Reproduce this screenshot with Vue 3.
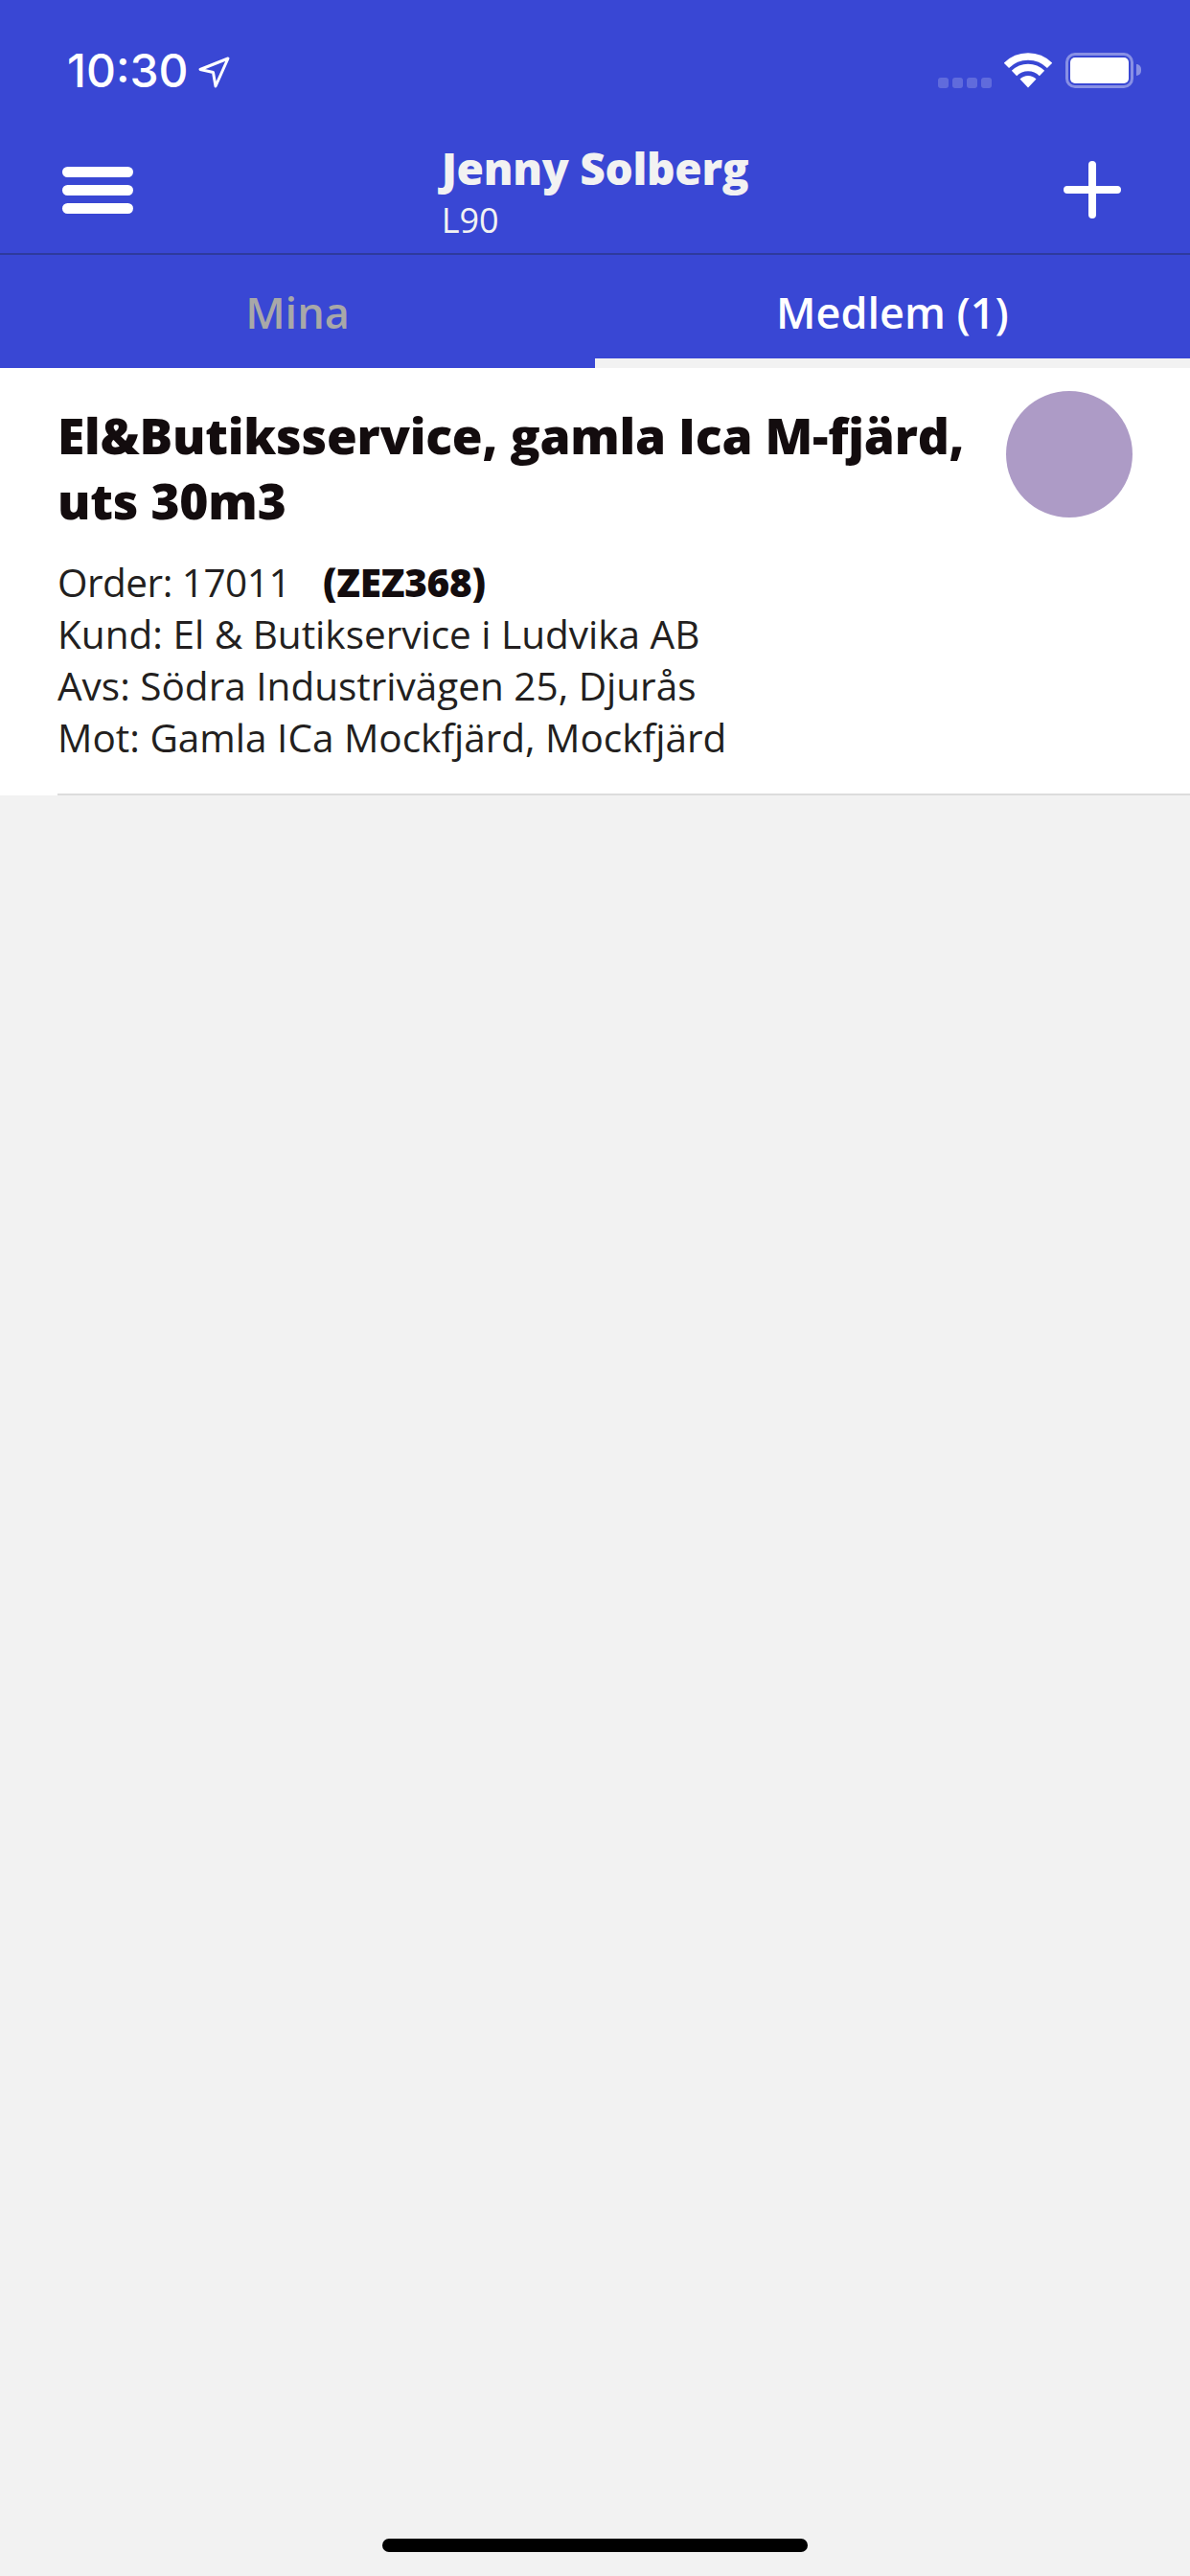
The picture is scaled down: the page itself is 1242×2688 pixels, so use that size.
<template>
  <div class="screen">
    <div class="top">
      <div class="status">
        <div class="clock">
          <span>10:30</span>
          <svg class="arrow" width="33" height="33" viewBox="0 0 33 33">
            <path d="M31 2 L2 13.5 L15.5 16.5 L18 31 Z" fill="none" stroke="#fff" stroke-width="3" stroke-linejoin="round" />
          </svg>
        </div>
        <div class="status-right">
          <div class="signal">
            <i v-for="n in 4" :key="n"></i>
          </div>
          <svg class="wifi" width="50" height="37" viewBox="0 0 50 37">
            <path d="M2.4 13.4 A32 32 0 0 1 47.6 13.4" fill="none" stroke="#fff" stroke-width="7.5" />
            <path d="M10.5 21.5 A20.5 20.5 0 0 1 39.5 21.5" fill="none" stroke="#fff" stroke-width="7.5" />
            <path d="M25 36.5 L16.5 27.5 A12 12 0 0 1 33.5 27.5 Z" fill="#fff" />
          </svg>
          <div class="battery">
            <div class="battery-level"></div>
          </div>
          <div class="battery-nub"></div>
        </div>
      </div>

      <header class="header">
        <button class="burger" aria-label="Meny">
          <i></i><i></i><i></i>
        </button>
        <div class="who">
          <div class="who-name">Jenny Solberg</div>
          <div class="who-sub">L90</div>
        </div>
        <svg class="plus" width="60" height="60" viewBox="0 0 60 60">
          <path d="M30 4 V56 M4 30 H56" fill="none" stroke="#fff" stroke-width="8" stroke-linecap="round" />
        </svg>
      </header>

      <nav class="tabs">
        <div
          v-for="tab in tabs"
          :key="tab.label"
          class="tab"
          :class="{ 'tab--active': tab.active }"
        >
          {{ tab.label }}
        </div>
      </nav>
    </div>

    <section class="order">
      <div class="order-main">
        <div class="order-text">
          <h2 class="order-title">El&amp;Butiksservice, gamla Ica M-fjärd, uts 30m3</h2>
          <div class="order-line order-line--first">Order: 17011 <b class="reg">(ZEZ368)</b></div>
          <div class="order-line">Kund: El &amp; Butikservice i Ludvika AB</div>
          <div class="order-line">Avs: Södra Industrivägen 25, Djurås</div>
          <div class="order-line">Mot: Gamla ICa Mockfjärd, Mockfjärd</div>
        </div>
        <div class="dot"></div>
      </div>
    </section>

    <div class="home-bar"></div>
  </div>
</template>

<script setup>
const tabs = [
  { label: 'Mina', active: false },
  { label: 'Medlem (1)', active: true }
]
</script>

<style>
body {
  background: #f2f2f2;
}
</style>

<style scoped>
.screen {
  display: flex;
  flex-direction: column;
  height: 2688px;
  background: #f2f2f2;
  font-family: "Open Sans", "Noto Sans", sans-serif;
}

.top {
  background: #3947d4;
  color: #fff;
}

.status {
  display: flex;
  justify-content: space-between;
  align-items: flex-start;
  height: 132px;
  padding: 48px 51px 0 70px;
  box-sizing: border-box;
}

.clock {
  display: flex;
  align-items: center;
  gap: 10px;
  font-family: Inter, sans-serif;
  font-size: 48px;
  font-weight: 500;
  line-height: 52px;
}

.arrow {
  margin-top: 2px;
}

.status-right {
  display: flex;
  align-items: flex-start;
  padding-top: 7px;
}

.signal {
  display: flex;
  gap: 4px;
  margin: 26px 13px 0 0;
}

.signal i {
  width: 11px;
  height: 11px;
  border-radius: 3px;
  background: rgba(255, 255, 255, 0.2);
}

.wifi {
  margin-right: 14px;
}

.battery {
  width: 71px;
  height: 37px;
  padding: 2px;
  box-sizing: border-box;
  border: 3px solid rgba(255, 255, 255, 0.4);
  border-radius: 10px;
}

.battery-level {
  height: 100%;
  border-radius: 5px;
  background: #fff;
}

.battery-nub {
  width: 5px;
  height: 12px;
  margin: 12px 0 0 3px;
  border-radius: 0 5px 5px 0;
  background: rgba(255, 255, 255, 0.4);
}

.header {
  display: grid;
  grid-template-columns: 1fr auto 1fr;
  align-items: center;
  height: 134px;
  padding: 0 65px;
  box-sizing: border-box;
  border-bottom: 2px solid #2e3a9e;
}

.burger {
  display: flex;
  flex-direction: column;
  gap: 8px;
  width: 74px;
  padding: 0;
  border: 0;
  background: none;
}

.burger i {
  height: 11px;
  border-radius: 6px;
  background: #fff;
}

.who {
  padding-top: 5px;
  color: #f2f2f2;
}

.who-name {
  font-size: 46px;
  font-weight: 800;
  line-height: 52px;
  letter-spacing: -0.3px;
}

.who-sub {
  margin-top: 7px;
  font-size: 36px;
  line-height: 44px;
}

.plus {
  justify-self: end;
  margin-right: 7px;
}

.tabs {
  display: grid;
  grid-template-columns: 1fr 1fr;
  height: 118px;
}

.tab {
  padding-top: 30px;
  box-sizing: border-box;
  color: #a8a8a8;
  font-size: 45px;
  font-weight: 600;
  line-height: 60px;
  text-align: center;
}

.tab--active {
  border-bottom: 10px solid #f2f2f2;
  color: #fff;
}

.order {
  padding-left: 60px;
  background: #fff;
}

.order-main {
  display: flex;
  justify-content: space-between;
  align-items: flex-start;
  height: 446px;
  padding: 24px 60px 0 0;
  box-sizing: border-box;
  border-bottom: 2px solid #dcdcdc;
}

.order-title {
  width: 980px;
  margin: 12px 0 25px;
  color: #130c0e;
  font-size: 51.5px;
  font-weight: 800;
  line-height: 68px;
  letter-spacing: -0.2px;
}

.order-line {
  color: #231f20;
  font-size: 40.5px;
  line-height: 54px;
}

.order-line--first {
  letter-spacing: -0.5px;
}

.reg {
  margin-left: 24px;
  font-weight: 800;
  letter-spacing: -0.3px;
  color: #130c0e;
}

.dot {
  flex: none;
  width: 132px;
  height: 132px;
  border-radius: 50%;
  background: #ad9bc6;
}

.home-bar {
  width: 444px;
  height: 14px;
  margin: auto auto 25px;
  border-radius: 7px;
  background: #000;
}
</style>
